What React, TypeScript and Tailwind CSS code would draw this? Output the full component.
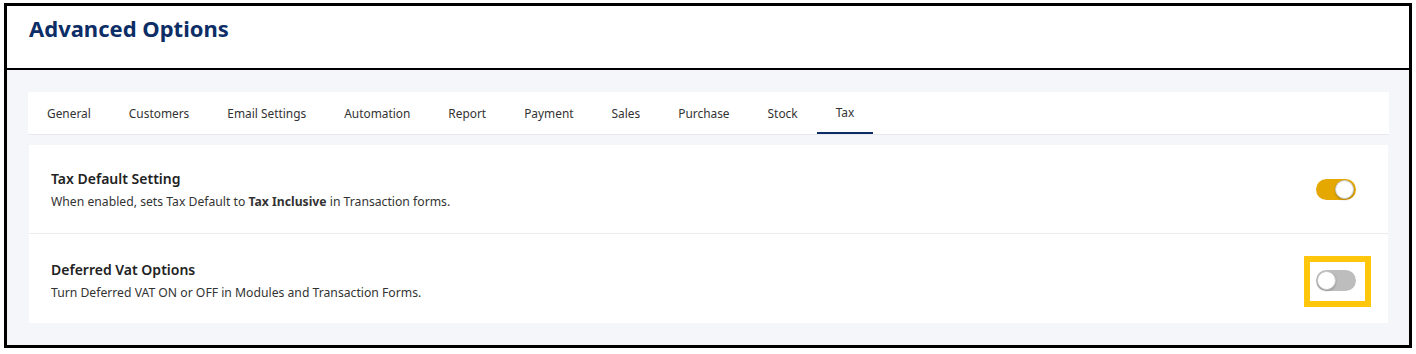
import React from "react";

const tabs = ["General", "Customers", "Email Settings", "Automation", "Report", "Payment", "Sales", "Purchase", "Stock", "Tax"];

function Toggle({ on }: { on: boolean }) {
  return (
    <div
      className={
        on
          ? "w-[40px] h-[21px] rounded-full bg-[#e5a800] flex items-center justify-end px-[2px]"
          : "w-[40px] h-[21px] rounded-full bg-[#bdbdbd] flex items-center justify-start px-[1px]"
      }
    >
      <div className="w-[19px] h-[19px] rounded-full bg-white border border-[#c9c9c9] shadow-[0_1px_2px_rgba(0,0,0,0.25)]" />
    </div>
  );
}

export default function App() {
  return (
    <div className="w-[1416px] h-[354px] bg-white pt-[3px] pl-[4px] font-['Noto_Sans',sans-serif]">
      <div className="w-[1408px] h-[345px] border-[3px] border-black flex flex-col">
        {/* Header */}
        <div className="h-[64px] shrink-0 flex items-center px-[22px] border-b-[2px] border-black bg-white">
          <h1 className="text-[22px] font-bold text-[#0c2d66] leading-none -mt-[18px]">Advanced Options</h1>
        </div>

        {/* Body */}
        <div className="flex-1 bg-[#f5f6fa] pt-[22px] pl-[21px] pr-[20px]">
          <div className="bg-white h-[43px] flex border-b border-[#e8e9ee]">
            {tabs.map((t) => (
              <div
                key={t}
                className={
                  t === "Tax"
                    ? "px-[19px] h-full flex items-center pt-[2px] text-[11.9px] text-[#333] border-b-[2px] border-[#0c2d66] -mb-px"
                    : "px-[19px] h-full flex items-center pt-[2px] text-[11.9px] text-[#333]"
                }
              >
                {t}
              </div>
            ))}
          </div>

          <div className="bg-white mt-[10px] ml-px mr-px">
            <div className="h-[89px] flex items-center justify-between pl-[22px] pr-[32px] border-b border-[#ececef]">
              <div className="mt-[2px]">
                <div className="text-[14px] font-semibold text-[#222] leading-[20px]">Tax Default Setting</div>
                <div className="text-[12.2px] text-[#333] leading-[20px] mt-[3px]">
                  When enabled, sets Tax Default to <span className="font-bold">Tax Inclusive</span> in Transaction forms.
                </div>
              </div>
              <Toggle on />
            </div>
            <div className="h-[89px] flex items-center justify-between pl-[22px] pr-[32px]">
              <div className="mt-[6px]">
                <div className="text-[14px] font-semibold text-[#222] leading-[20px]">Deferred Vat Options</div>
                <div className="text-[12.2px] text-[#333] leading-[20px] mt-[3px]">
                  Turn Deferred VAT ON or OFF in Modules and Transaction Forms.
                </div>
              </div>
              <div className="relative mt-[3px]">
                <Toggle on={false} />
                <div className="absolute -left-[12px] -top-[14px] w-[67px] h-[51px] border-[6px] border-[#ffc60b]" />
              </div>
            </div>
          </div>
        </div>
      </div>
    </div>
  );
}
